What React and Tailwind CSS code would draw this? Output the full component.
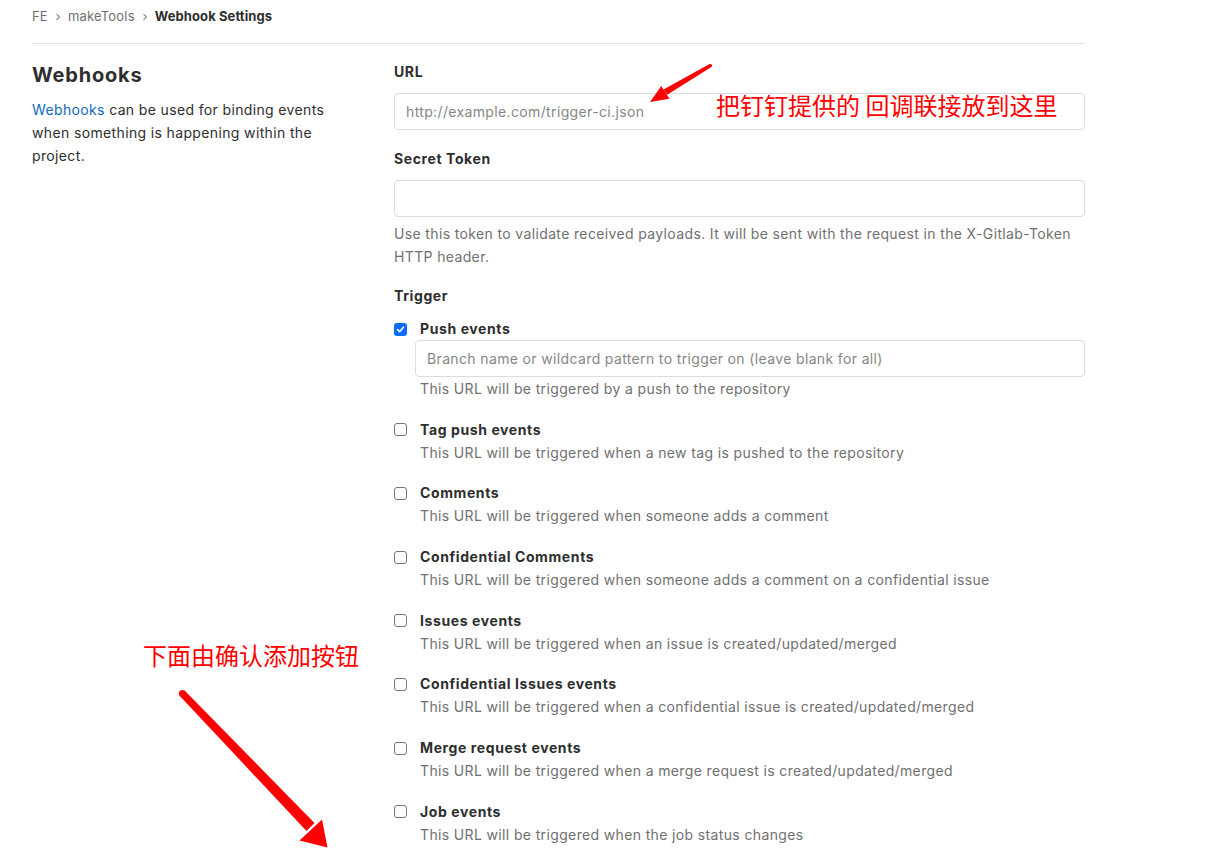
import React from "react";

const font = { fontFamily: "Inter, 'Noto Sans', 'Liberation Sans', sans-serif" };
const cjk = { fontFamily: "'Noto Sans CJK SC', 'Noto Sans', sans-serif" };

function Box({ checked }) {
  if (checked) {
    return (
      <span className="flex h-[13px] w-[13px] shrink-0 items-center justify-center rounded-[3px] bg-[#0b6cf5]">
        <svg width="9" height="9" viewBox="0 0 10 10">
          <path d="M1.8 5.2 L4 7.4 L8.3 2.4" fill="none" stroke="#fff" strokeWidth="1.8" strokeLinecap="round" strokeLinejoin="round" />
        </svg>
      </span>
    );
  }
  return <span className="block h-[13px] w-[13px] shrink-0 rounded-[3px] border border-[#767676] bg-white" />;
}

function Trigger({ label, help, checked, children }) {
  return (
    <div className="mt-[19.7px] first:mt-[12px]">
      <div className="flex items-center pt-[1px]">
        <Box checked={checked} />
        <span className="ml-[13px] text-[14px] font-bold leading-[20px] tracking-[0.6px] text-[#2e2e2e]">{label}</span>
      </div>
      {children}
      <div className={"pl-[26px] text-[14px] leading-[20px] tracking-[0.36px] text-[#707070] " + (children ? "mt-[2px]" : "mt-[3px]")}>{help}</div>
    </div>
  );
}

const triggers = [
  ["Tag push events", "This URL will be triggered when a new tag is pushed to the repository"],
  ["Comments", "This URL will be triggered when someone adds a comment"],
  ["Confidential Comments", "This URL will be triggered when someone adds a comment on a confidential issue"],
  ["Issues events", "This URL will be triggered when an issue is created/updated/merged"],
  ["Confidential Issues events", "This URL will be triggered when a confidential issue is created/updated/merged"],
  ["Merge request events", "This URL will be triggered when a merge request is created/updated/merged"],
  ["Job events", "This URL will be triggered when the job status changes"],
];

export default function App() {
  return (
    <div className="relative h-[855px] w-[1208px] overflow-hidden bg-white" style={font}>
      <div className="ml-[32px] w-[1053px]">
        <div className="flex h-[44px] items-start border-b border-[#e5e5e5] pt-[7px] text-[13px] leading-[18px] tracking-[0.2px]">
          <span className="text-[#707070]">FE</span>
          <svg className="mx-[7px] mt-[6px]" width="6" height="8" viewBox="0 0 6 8">
            <path d="M1.5 1 L4.5 4 L1.5 7" fill="none" stroke="#909090" strokeWidth="1.1" />
          </svg>
          <span className="text-[#707070]">makeTools</span>
          <svg className="mx-[7px] mt-[6px]" width="6" height="8" viewBox="0 0 6 8">
            <path d="M1.5 1 L4.5 4 L1.5 7" fill="none" stroke="#909090" strokeWidth="1.1" />
          </svg>
          <span className="font-bold tracking-[0.1px] text-[#2e2e2e]">Webhook Settings</span>
        </div>

        <div className="flex pt-[18px]">
          <div className="w-[362px] shrink-0 pr-[20px]">
            <h4 className="mt-[1px] text-[20px] font-bold leading-[24px] tracking-[0.8px] text-[#2e2e2e]">Webhooks</h4>
            <p className="mt-[11px] text-[14px] leading-[23px] tracking-[0.36px] text-[#2e2e2e]">
              <span className="text-[#1068bf]">Webhooks</span> can be used for binding events
              <br />
              when something is happening within the
              <br />
              project.
            </p>
          </div>

          <div className="min-w-0 flex-1">
            <div className="text-[14px] font-bold leading-[20px] tracking-[0.6px] text-[#2e2e2e]">URL</div>
            <div className="mt-[11px] flex h-[37px] items-center rounded-[4px] border border-[#dcdcdc] px-[11px] text-[14px] tracking-[0.36px] text-[#868686]">
              http://example.com/trigger-ci.json
            </div>

            <div className="mt-[19px] text-[14px] font-bold leading-[20px] tracking-[0.6px] text-[#2e2e2e]">Secret Token</div>
            <div className="mt-[11px] h-[37px] rounded-[4px] border border-[#dcdcdc]" />
            <p className="mt-[5px] text-[14px] leading-[23px] tracking-[0.36px] text-[#707070]">
              Use this token to validate received payloads. It will be sent with the request in the X-Gitlab-Token
              <br />
              HTTP header.
            </p>

            <div className="mt-[18px] text-[14px] font-bold leading-[20px] tracking-[0.6px] text-[#2e2e2e]">Trigger</div>

            <div>
              <Trigger label="Push events" checked help="This URL will be triggered by a push to the repository">
                <div className="ml-[21px] mt-[1px] flex h-[37px] items-center rounded-[4px] border border-[#dcdcdc] px-[11px] text-[14px] tracking-[0.36px] text-[#868686]">
                  Branch name or wildcard pattern to trigger on (leave blank for all)
                </div>
              </Trigger>
              {triggers.map(([l, h]) => (
                <Trigger key={l} label={l} help={h} />
              ))}
            </div>
          </div>
        </div>
      </div>

      {/* annotations */}
      <div className="absolute left-[716px] top-[90px] text-[24px] leading-[30px] text-[#ff0000]" style={cjk}>
        把钉钉提供的 回调联接放到这里
      </div>
      <div className="absolute left-[143px] top-[640px] text-[24px] leading-[30px] text-[#ff0000]" style={cjk}>
        下面由确认添加按钮
      </div>
      <svg className="pointer-events-none absolute left-0 top-0" width="1208" height="855" viewBox="0 0 1208 855">
        <circle cx="710.5" cy="65.5" r="1.6" fill="#ff0000" />
        <polygon points="709.6,64.1 711.4,66.9 667.2,94.8 663.5,89.4" fill="#ff0000" />
        <polygon points="650,102 661.3,85.9 669.5,98.7" fill="#ff0000" />
        <circle cx="182.5" cy="693.5" r="3.6" fill="#ff0000" />
        <polygon points="179.9,696 185.1,691 314.5,823 306.5,831" fill="#ff0000" />
        <polygon points="327.5,847.5 299.5,840.5 322,819.5" fill="#ff0000" />
      </svg>
    </div>
  );
}
